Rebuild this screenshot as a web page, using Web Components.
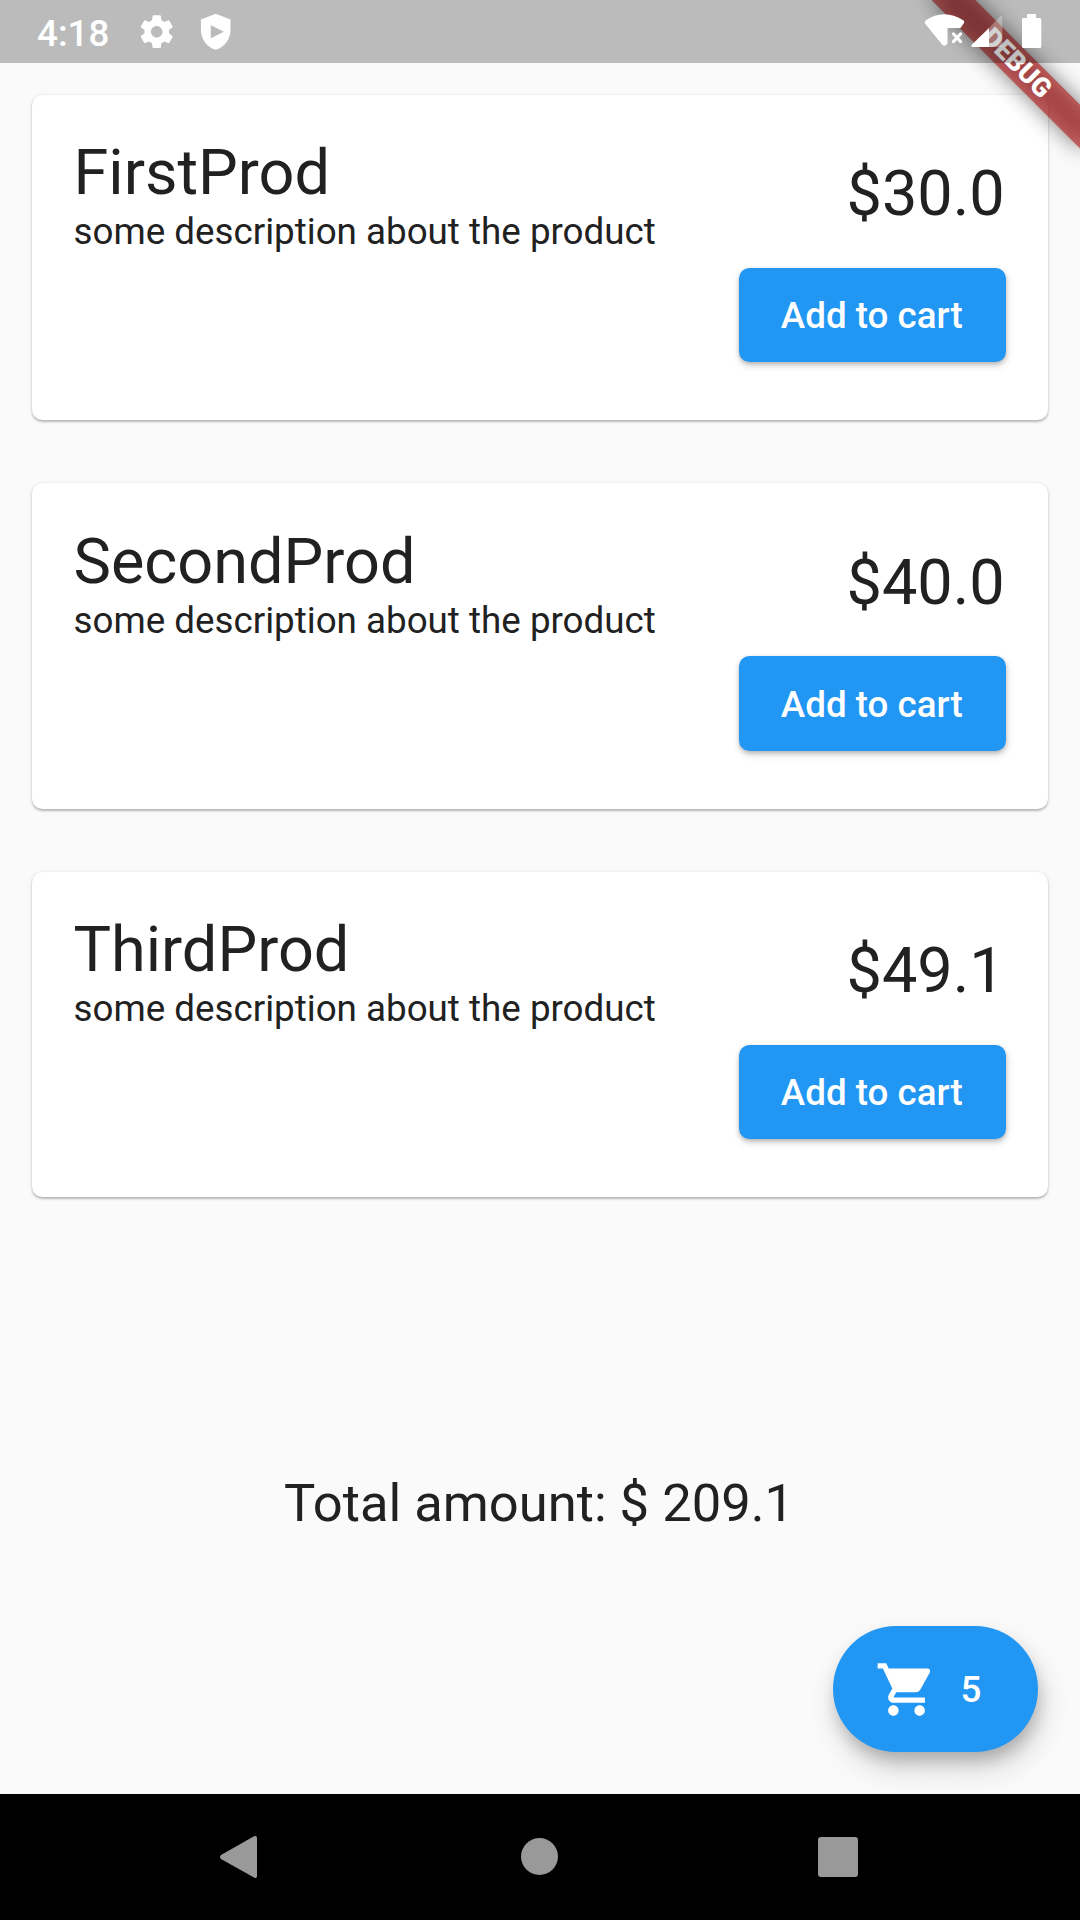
<!DOCTYPE html>
<html lang="en">
<head>
<meta charset="utf-8">
<title>Shop</title>
<style>
html, body { margin: 0; height: 100%; }
body { font-family: Roboto, "Noto Sans", sans-serif; color: #212121; background: #fafafa; overflow: hidden; }
</style>
</head>
<body>
<shop-app></shop-app>
<script>
const define = (name, html) => customElements.define(name, class extends HTMLElement {
  constructor() {
    super();
    const t = document.createElement('template');
    t.innerHTML = html;
    this.attachShadow({ mode: 'open' }).append(t.content.cloneNode(true));
  }
});

define('status-bar', `
<style>
:host { position: absolute; inset: 0 0 auto 0; z-index: 3; height: 63px; box-sizing: border-box; display: flex; align-items: center; justify-content: space-between; background: rgba(0,0,0,.25); color: #fff; padding-left: 37px; }
.left, .right { display: flex; align-items: center; height: 63px; }
.time { font-size: 36.75px; font-weight: 500; line-height: 43px; padding-top: 3px; width: 100.300px; }
.right { padding-right: 38px; }
svg { display: block; fill: #fff; }
.shield { margin-left: 19px; }
</style>
<div class="left">
  <div class="time">4:18</div>
  <svg width="39.4" height="39.4" viewBox="0 0 24 24"><path d="M19.43 12.98c.04-.32.07-.64.07-.98s-.03-.66-.07-.98l2.11-1.65c.19-.15.24-.42.12-.64l-2-3.46c-.12-.22-.39-.3-.61-.22l-2.49 1c-.52-.4-1.08-.73-1.69-.98l-.38-2.65C14.46 2.18 14.25 2 14 2h-4c-.25 0-.46.18-.49.42l-.38 2.65c-.61.25-1.17.59-1.69.98l-2.49-1c-.23-.09-.49 0-.61.22l-2 3.46c-.13.22-.07.49.12.64l2.11 1.65c-.04.32-.07.65-.07.98s.03.66.07.98l-2.11 1.65c-.19.15-.24.42-.12.64l2 3.46c.12.22.39.3.61.22l2.49-1c.52.4 1.08.73 1.69.98l.38 2.65c.03.24.24.42.49.42h4c.25 0 .46-.18.49-.42l.38-2.65c.61-.25 1.17-.59 1.69-.98l2.49 1c.23.09.49 0 .61-.22l2-3.46c.12-.22.07-.49-.12-.64l-2.11-1.65zM12 15.5c-1.93 0-3.5-1.57-3.5-3.5s1.57-3.5 3.5-3.5 3.5 1.57 3.5 3.5-1.57 3.5-3.5 3.5z"/></svg>
  <svg class="shield" width="39.4" height="39.4" viewBox="0 0 24 24"><path fill-rule="evenodd" d="M12 1 3 4.500v6.500c0 5.55 3.84 10.74 9 12 5.16-1.26 9-6.45 9-12V4.500zM9 8v8l8-4z"/></svg>
</div>
<div class="right">
  <svg width="120" height="63" viewBox="922 0 120 63">
    <path d="M925.5 20.5Q944 8 963.6 20.5Q964.8 21.5 964 23L960.5 28H947.500V43.500Q945 47.500 942 44.500L925 23.500Q924.500 21.500 925.500 20.500Z"/>
    <path d="M953.500 34 960.500 41.500M960.500 34 953.500 41.500" fill="none" stroke="#fff" stroke-width="3.200" stroke-linecap="round"/>
    <path d="M989 28V47H972.500Q970.500 46.500 971.500 45Z"/>
    <path opacity=".3" d="M989 28 1000 16.500Q1002.300 15 1002.300 17.500V46Q1002 47 1001 47H989Z"/>
    <path d="M1027 14H1036V18H1040Q1041.300 18 1041.300 19.500V46.500Q1041.300 48 1040 48H1023.500Q1022 48 1022 46.500V19.500Q1022 18 1023.500 18H1027Z"/>
  </svg>
</div>`);

define('debug-banner', `
<style>
:host { position: absolute; right: 0; top: 0; width: 210px; height: 210px; overflow: hidden; z-index: 2; pointer-events: none; }
.turn { position: absolute; left: 210px; top: 0; width: 0; height: 0; transform: rotate(45deg); }
.shade, .band { position: absolute; left: -105px; top: 73.5px; width: 210px; height: 31.500px; }
.shade { background: rgba(0,0,0,.5); filter: blur(10.400px); }
.band { background: rgba(183,28,28,.627); color: #fff; display: flex; align-items: center; justify-content: center; font-size: 26.775px; line-height: 1; font-weight: 900; }
</style>
<div class="turn"><div class="shade"></div><div class="band"><span>DEBUG</span></div></div>`);

define('cart-button', `
<style>
:host { display: block; }
button { display: flex; align-items: center; justify-content: center; box-sizing: border-box; width: 267.500px; height: 94.5px; padding: 1.200px 1px 0 0; border: 0; border-radius: 10.5px; background: #2196f3; color: #fff; font: 500 36.75px/43px Roboto, sans-serif; white-space: nowrap; box-shadow: 0 2px 4px rgba(0,0,0,.22), 1px 4px 8px rgba(0,0,0,.12); }
</style>
<button><slot></slot></button>`);

define('product-card', `
<style>
:host { display: flex; justify-content: space-between; box-sizing: border-box; height: 325.5px; padding: 41.5px 42px 41.5px 41.5px; background: #fff; border-radius: 10.5px; box-shadow: 0 1.500px 2px rgba(0,0,0,.2), 0 1px 4px rgba(0,0,0,.12); }
.title { font-size: 63px; line-height: 74px; }
.desc { font-size: 36.75px; line-height: 43px; }
.buy { display: flex; flex-direction: column; width: 267.5px; padding-top: 21.05px; }
.price { font-size: 63px; line-height: 74px; padding-left: 108px; margin-bottom: 36.7px; }
</style>
<div><div class="title"><slot name="title"></slot></div><div class="desc"><slot name="description"></slot></div></div>
<div class="buy"><div class="price"><slot name="price"></slot></div><cart-button>Add to cart</cart-button></div>`);

define('total-amount', `
<style>:host { display: block; text-align: center; font-size: 52.5px; line-height: 62px; padding-right: 2px; }</style><slot></slot>`);

define('cart-fab', `
<style>
:host { display: flex; align-items: center; box-sizing: border-box; width: 205px; height: 126px; padding-left: 42px; border-radius: 63px; background: #2196f3; color: #fff; font-size: 36.75px; line-height: 43px; font-weight: 500; gap: 22.5px; box-shadow: 2px 10px 16px -2px rgba(0,0,0,.2), 4px 16px 30px rgba(0,0,0,.16); }
svg { fill: #fff; display: block; }
</style>
<svg width="63" height="63" viewBox="0 0 24 24"><path d="M7 18c-1.100 0-1.990.9-1.990 2S5.900 22 7 22s2-.9 2-2-.9-2-2-2zM1 2v2h2l3.600 7.590-1.350 2.450c-.16.28-.25.61-.25.96 0 1.100.9 2 2 2h12v-2H7.420c-.14 0-.25-.11-.25-.25l.03-.12.900-1.630h7.450c.75 0 1.410-.41 1.750-1.030l3.580-6.490c.08-.14.12-.31.12-.48 0-.55-.45-1-1-1H5.210l-.94-2H1zm16 16c-1.100 0-1.990.9-1.990 2s.89 2 1.990 2 2-.9 2-2-.9-2-2-2z"/></svg>
<span><slot></slot></span>`);

define('nav-bar', `
<style>
:host { display: flex; align-items: center; justify-content: space-between; box-sizing: border-box; height: 126px; padding: 0 220px 0 218px; background: #000; flex: none; }
svg { display: block; fill: #999; }
</style>
<svg width="42" height="44" viewBox="218 1835 42 44"><path d="M221 1855 254 1836.300Q257 1835 257 1838V1876Q257 1879 254 1877.500L221 1859Q219 1857 221 1855Z"/></svg>
<svg width="38" height="38" viewBox="0 0 38 38"><circle cx="19.500" cy="18.500" r="18.500"/></svg>
<svg width="42" height="42" viewBox="0 0 42 42"><rect x="0" y="1" width="40" height="40" rx="3"/></svg>`);

define('shop-app', `
<style>
:host { display: flex; flex-direction: column; position: relative; width: 1080px; height: 1920px; overflow: hidden; background: #fafafa; }
main { flex: 1; display: flex; flex-direction: column; padding: 94.5px 32px 0; }
.list { display: flex; flex-direction: column; gap: 63px; }
total-amount { margin-top: 275px; }
cart-fab { align-self: flex-end; margin: 92px 10px 0 0; }
</style>
<status-bar></status-bar>
<debug-banner></debug-banner>
<main>
  <div class="list">
    <product-card><span slot="title">FirstProd</span><span slot="description">some description about the product</span><span slot="price">$30.0</span></product-card>
    <product-card><span slot="title">SecondProd</span><span slot="description">some description about the product</span><span slot="price">$40.0</span></product-card>
    <product-card><span slot="title">ThirdProd</span><span slot="description">some description about the product</span><span slot="price">$49.1</span></product-card>
  </div>
  <total-amount>Total amount: $ 209.1</total-amount>
  <cart-fab>5</cart-fab>
</main>
<nav-bar></nav-bar>`);
</script>
</body>
</html>
